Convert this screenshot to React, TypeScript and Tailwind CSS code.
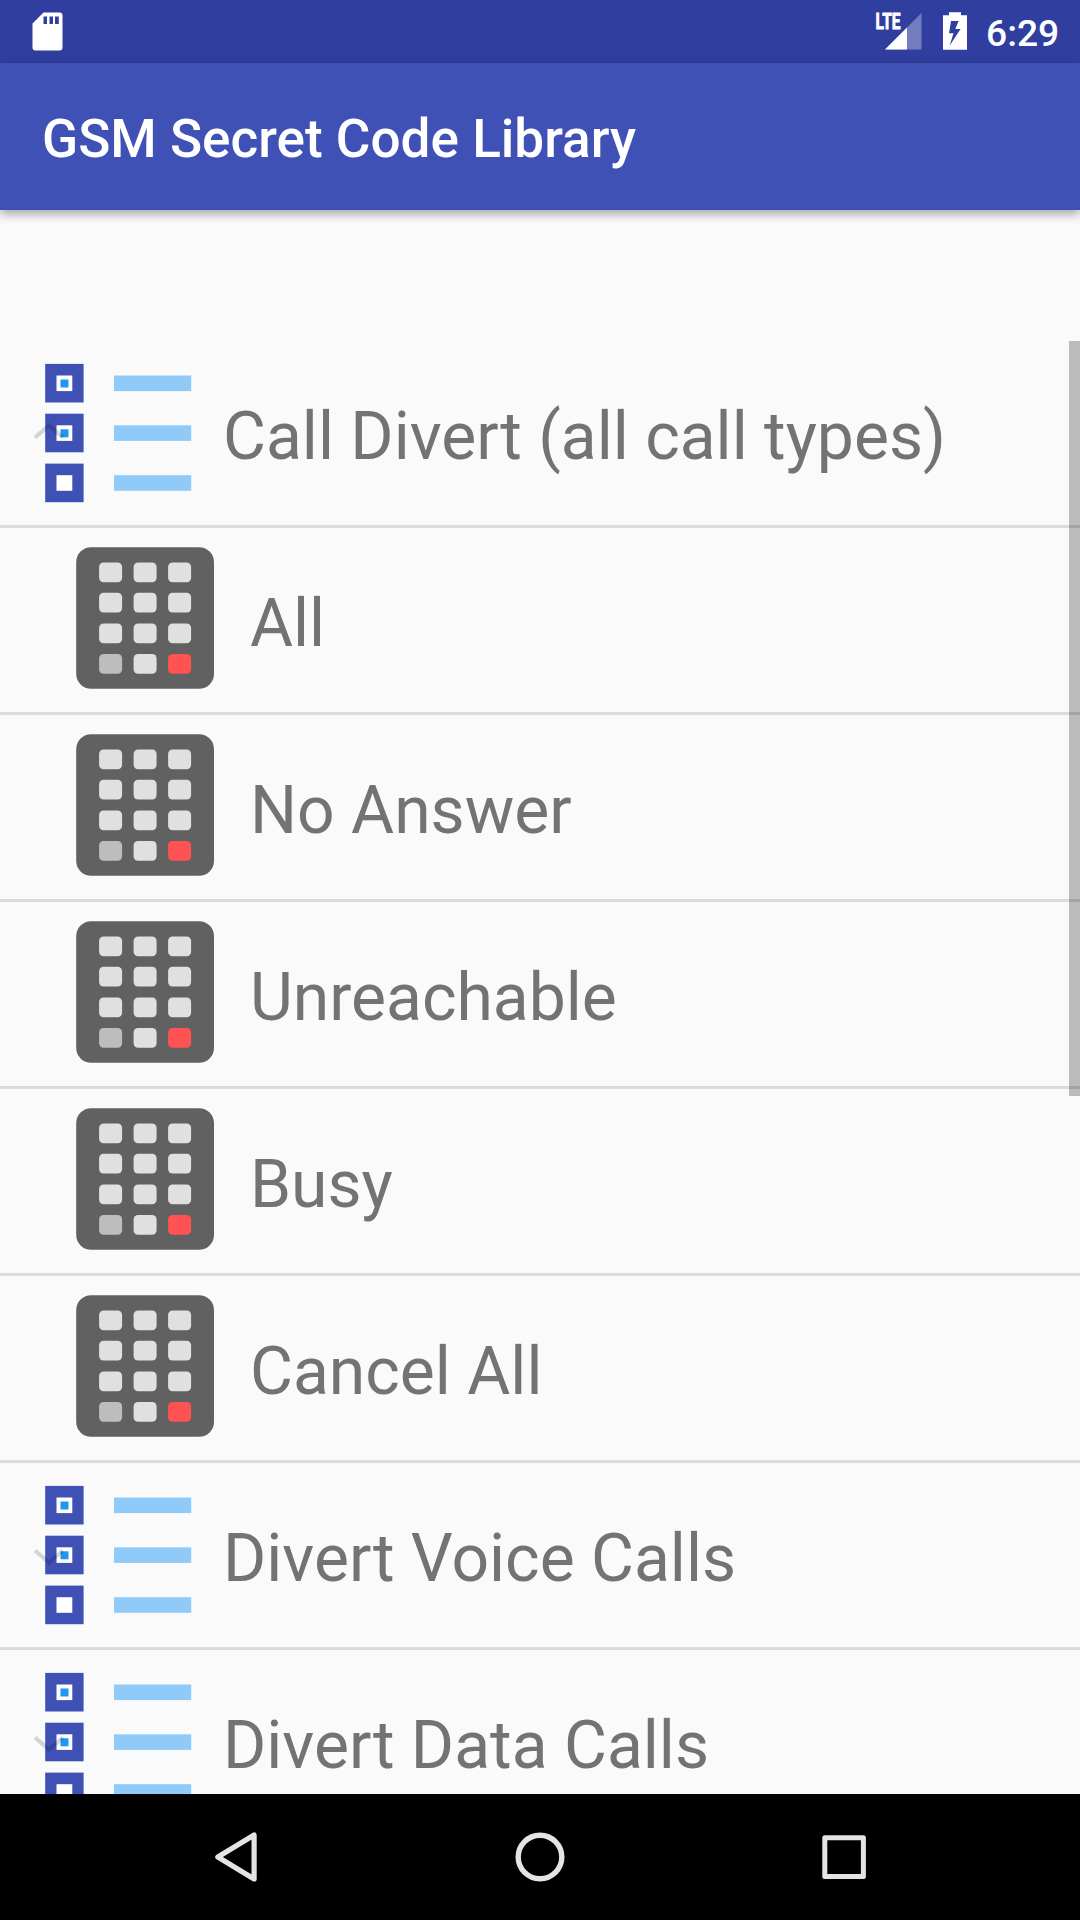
import React from 'react';

type RowKind = 'group' | 'code';

interface Row {
    kind: RowKind;
    label: string;
    expanded?: boolean;
}

const rows: Row[] = [
    { kind: 'group', label: 'Call Divert (all call types)', expanded: true },
    { kind: 'code', label: 'All' },
    { kind: 'code', label: 'No Answer' },
    { kind: 'code', label: 'Unreachable' },
    { kind: 'code', label: 'Busy' },
    { kind: 'code', label: 'Cancel All' },
    { kind: 'group', label: 'Divert Voice Calls' },
    { kind: 'group', label: 'Divert Data Calls' },
];

const GroupIcon: React.FC<{ expanded?: boolean }> = ({ expanded }) => (
    <svg width="223" height="184" viewBox="0 0 223 184" className="shrink-0">
        {[22.9, 72.7, 122.6].map((y, i) => (
            <g key={y}>
                <rect x="45.2" y={y} width="38.4" height="38.6" fill="#3f51b5" />
                <rect x="56.5" y={y + 11.6} width="15.8" height="15.6" fill="#fff" />
                {i < 2 && <rect x="60.5" y={y + 15.6} width="8" height="8" fill="#2196f3" />}
                <rect x="114" y={y + 11.6} width="77.2" height="15.6" fill="#90caf9" />
            </g>
        ))}
        <path
            d={expanded ? 'M35 96.5L49 84.5L63 96.5' : 'M35 87.5L49 99.5L63 87.5'}
            fill="none"
            stroke="#000"
            strokeOpacity="0.15"
            strokeWidth="4.2"
        />
    </svg>
);

const keyColor = (row: number, col: number) => {
    if (row < 3 || col === 1) return '#e0e0e0';
    return col === 0 ? '#bdbdbd' : '#ff5252';
};

const KeypadIcon: React.FC = () => (
    <svg width="250" height="184" viewBox="0 0 250 184" className="shrink-0">
        <rect x="76.2" y="19.2" width="137.8" height="141.6" rx="15" fill="#616161" />
        {[34.4, 64.8, 95.4, 126].map((y, row) =>
            [99.1, 133.6, 168.1].map((x, col) => (
                <rect key={`${row}-${col}`} x={x} y={y} width="23" height="19.8" rx="4.5" fill={keyColor(row, col)} />
            ))
        )}
    </svg>
);

const StatusBar: React.FC = () => (
    <div className="flex h-[63px] shrink-0 items-center justify-between bg-[#303f9f]">
        <svg width="80" height="63" viewBox="0 0 80 63">
            <path
                fillRule="evenodd"
                fill="#fff"
                d="M43.5 12.5H59.5Q62.5 12.5 62.5 15.5V47.5Q62.5 50.5 59.5 50.5H35.5Q32.5 50.5 32.5 47.5V23.5ZM43.5 16.5V24H47V16.5ZM49.5 16.5V24H53V16.5ZM55 16.5V24H58.8V16.5Z"
            />
        </svg>
        <div className="flex h-full items-center">
            <svg width="110" height="63" viewBox="870 0 110 63">
                <path d="M885 49.5L921.5 13V49.5Z" fill="#fff" fillOpacity="0.32" />
                <path d="M885 49.5L907 27.5V49.5Z" fill="#fff" />
                <text
                    x="875.5"
                    y="29"
                    textLength="25"
                    lengthAdjust="spacingAndGlyphs"
                    fill="#fff"
                    stroke="#fff"
                    strokeWidth="0.8"
                    fontFamily="Roboto, sans-serif"
                    fontWeight="700"
                    fontSize="21.5"
                >
                    LTE
                </text>
                <path
                    fillRule="evenodd"
                    fill="#fff"
                    d="M943 15.3H949V12.3H961V15.3H967V49.7H943ZM951 21L949 33.3H953.5L949.7 45.5L960.6 29H955.3L958.6 21Z"
                />
            </svg>
            <span className="w-[100px] pt-[4px] pl-[6px] text-[37.2px] leading-none font-medium text-white">6:29</span>
        </div>
    </div>
);

const NavBar: React.FC = () => (
    <div className="flex h-[126px] shrink-0 items-center justify-center gap-[240px] bg-black">
        <svg width="64" height="64" viewBox="0 0 64 64" fill="none" stroke="#e4e4e4" strokeWidth="5.2" strokeLinejoin="round">
            <path d="M50.1 10V54L13.8 32Z" />
        </svg>
        <svg width="64" height="64" viewBox="0 0 64 64" fill="none" stroke="#e4e4e4" strokeWidth="5.4">
            <circle cx="32" cy="32" r="21.8" />
        </svg>
        <svg width="64" height="64" viewBox="0 0 64 64" fill="none" stroke="#e4e4e4" strokeWidth="5" strokeLinejoin="round">
            <rect x="12.8" y="12.8" width="38.6" height="38.6" />
        </svg>
    </div>
);

const ListRow: React.FC<{ row: Row }> = ({ row }) => (
    <li className="flex h-[187px] shrink-0 items-start border-b-3 border-[#dbdbdb]">
        {row.kind === 'group' ? <GroupIcon expanded={row.expanded} /> : <KeypadIcon />}
        <span className="pt-[57px] text-[66px] leading-[78px] whitespace-nowrap text-[#737373]">{row.label}</span>
    </li>
);

const App: React.FC = () => {
    return (
        <div className="flex h-[1920px] w-[1080px] flex-col overflow-hidden bg-[#fafafa] font-['Roboto',sans-serif]">
            <StatusBar />
            <header className="z-10 flex h-[147px] shrink-0 items-center bg-[#3f51b5] pt-[6px] pl-[42px] shadow-[0_4px_10px_rgba(0,0,0,0.35)]">
                <h1 className="text-[53.1px] leading-none font-medium text-white">GSM Secret Code Library</h1>
            </header>
            <main className="relative min-h-0 flex-1 overflow-hidden pt-[131px]">
                <ul className="flex flex-col">
                    {rows.map((row) => (
                        <ListRow key={row.label} row={row} />
                    ))}
                </ul>
                {/* scroll thumb */}
                <div className="absolute top-[131px] right-0 h-[755px] w-[11px] bg-black/25" />
            </main>
            <NavBar />
        </div>
    );
};

export default App;
